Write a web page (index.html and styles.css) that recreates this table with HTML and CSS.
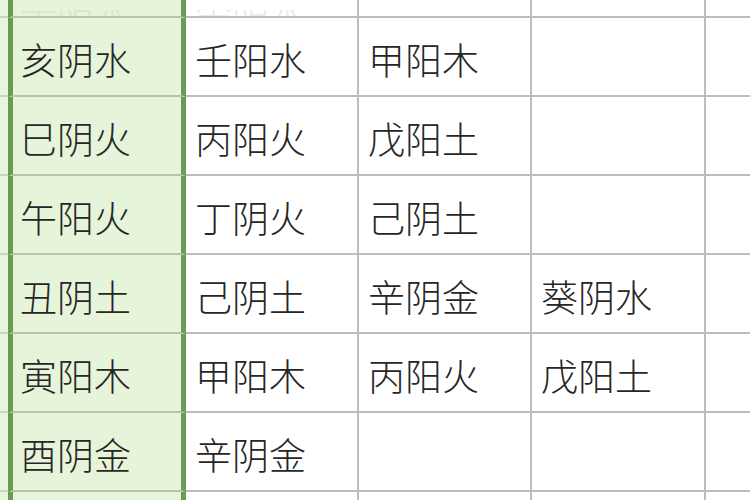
FILE: index.html
```html
<!DOCTYPE html>
<html lang="zh">
<head>
<meta charset="utf-8">
<link rel="stylesheet" href="styles.css">
</head>
<body>
<div class="sheet">
  <div class="row top">
    <div class="strip"></div>
    <div class="cell key"><span>子阳水</span></div>
    <div class="cell"><span>癸阴水</span></div>
    <div class="cell"></div>
    <div class="cell"></div>
    <div class="cell last"></div>
  </div>
  <div class="row">
    <div class="strip"></div>
    <div class="cell key">亥阴水</div>
    <div class="cell">壬阳水</div>
    <div class="cell">甲阳木</div>
    <div class="cell"></div>
    <div class="cell last"></div>
  </div>
  <div class="row">
    <div class="strip"></div>
    <div class="cell key">巳阴火</div>
    <div class="cell">丙阳火</div>
    <div class="cell">戊阳土</div>
    <div class="cell"></div>
    <div class="cell last"></div>
  </div>
  <div class="row">
    <div class="strip"></div>
    <div class="cell key">午阳火</div>
    <div class="cell">丁阴火</div>
    <div class="cell">己阴土</div>
    <div class="cell"></div>
    <div class="cell last"></div>
  </div>
  <div class="row">
    <div class="strip"></div>
    <div class="cell key">丑阴土</div>
    <div class="cell">己阴土</div>
    <div class="cell">辛阴金</div>
    <div class="cell">葵阴水</div>
    <div class="cell last"></div>
  </div>
  <div class="row">
    <div class="strip"></div>
    <div class="cell key">寅阳木</div>
    <div class="cell">甲阳木</div>
    <div class="cell">丙阳火</div>
    <div class="cell">戊阳土</div>
    <div class="cell last"></div>
  </div>
  <div class="row">
    <div class="strip"></div>
    <div class="cell key">酉阴金</div>
    <div class="cell">辛阴金</div>
    <div class="cell"></div>
    <div class="cell"></div>
    <div class="cell last"></div>
  </div>
  <div class="row">
    <div class="strip"></div>
    <div class="cell key"></div>
    <div class="cell"></div>
    <div class="cell"></div>
    <div class="cell"></div>
    <div class="cell last"></div>
  </div>
</div>
</body>
</html>
```

FILE: styles.css
```css
html, body {
  margin: 0;
  padding: 0;
  background: #ffffff;
  overflow: hidden;
}
.sheet {
  width: 750px;
  height: 500px;
  overflow: hidden;
  font-family: "Noto Sans CJK SC", "Noto Sans", sans-serif;
  font-weight: 300;
  font-size: 37px;
  color: #262626;
}
.row {
  display: grid;
  grid-template-columns: 8px 178px 173px 173px 174px 44px;
  height: 79px;
}
.row.top {
  height: 18px;
}
.strip {
  background: #e8f5dc;
  border-bottom: 2px solid #c9d8bd;
}
.cell {
  display: flex;
  align-items: center;
  padding: 5px 0 0 9px;
  border-right: 2px solid #bdbdbd;
  border-bottom: 2px solid #bdbdbd;
  white-space: nowrap;
  overflow: hidden;
  box-sizing: border-box;
}
.cell.key {
  background: #e6f4d9;
  border-left: 5px solid #6b9a52;
  border-right: 5px solid #6b9a52;
  border-bottom-color: #b5c6a8;
  padding-left: 7px;
}
.cell.last {
  border-right: none;
}
.top .cell {
  align-items: flex-end;
  padding-top: 0;
}
.top .cell span {
  display: block;
  height: 6px;
  overflow: hidden;
  line-height: 0;
  color: #d0d0d0;
  opacity: 0.45;
}
```
